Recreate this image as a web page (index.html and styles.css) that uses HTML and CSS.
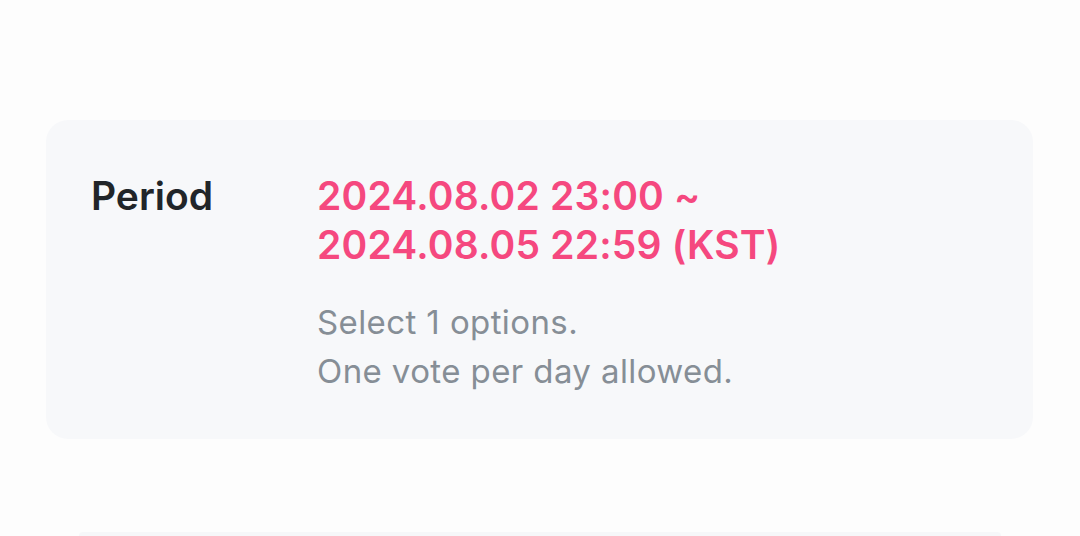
FILE: index.html
```html
<!DOCTYPE html>
<html lang="en">
<head>
    <meta charset="UTF-8">
    <title>Vote info</title>
    <link rel="stylesheet" href="styles.css">
</head>
<body>
<div class="page">
    <div class="info-card">
        <div class="info-label">Period</div>
        <div class="info-body">
            <div class="period">
                2024.08.02 23:00 ~<br>
                2024.08.05 22:59 (KST)
            </div>
            <div class="rules">
                Select 1 options.<br>
                One vote per day allowed.
            </div>
        </div>
    </div>
    <div class="next-block"></div>
</div>
</body>
</html>
```
FILE: styles.css
```css
html, body {
    margin: 0;
    padding: 0;
    background: #fdfdfd;
}
body {
    font-family: Inter, "Noto Sans", sans-serif;
    width: 1080px;
    height: 536px;
    overflow: hidden;
}
.page {
    padding: 120px 47px 0 46px;
}
.info-card {
    display: flex;
    background: #f7f8fa;
    border-radius: 22px;
    padding: 51px 44px 43px 45px;
    height: 225px;
}
.info-label {
    width: 226px;
    flex-shrink: 0;
    font-size: 39px;
    line-height: 49px;
    font-weight: 600;
    color: #212529;
}
.period {
    font-size: 39px;
    line-height: 49px;
    font-weight: 600;
    letter-spacing: 0.2px;
    color: #f5487f;
}
.rules {
    margin-top: 29px;
    font-size: 33px;
    line-height: 49px;
    letter-spacing: 0.4px;
    color: #868e96;
}
.next-block {
    margin: 93px 32px 0 33px;
    height: 20px;
    background: #f6f7f9;
    border-radius: 4px;
}
```
